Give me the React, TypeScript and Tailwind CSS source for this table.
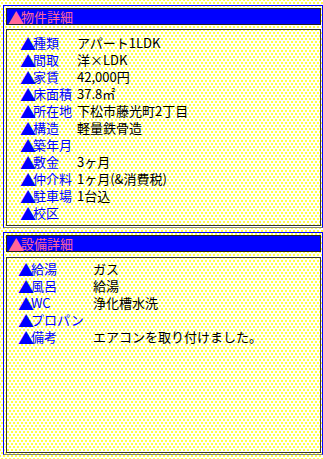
export default function App() {
  const bukken = [
    { label: '種類', value: 'アパート1LDK' },
    { label: '間取', value: '洋×LDK' },
    { label: '家賃', value: '42,000円' },
    { label: '床面積', value: '37.8㎡' },
    { label: '所在地', value: '下松市藤光町2丁目' },
    { label: '構造', value: '軽量鉄骨造' },
    { label: '築年月', value: '' },
    { label: '敷金', value: '3ヶ月' },
    { label: '仲介料', value: '1ヶ月(&消費税)' },
    { label: '駐車場', value: '1台込' },
    { label: '校区', value: '' },
  ];

  const setsubi = [
    { label: '給湯', value: 'ガス' },
    { label: '風呂', value: '給湯' },
    { label: 'WC', value: '浄化槽水洗' },
    { label: 'プロパン', value: '' },
    { label: '備考', value: 'エアコンを取り付けました。' },
  ];

  // sparse yellow dot tile behind the whole page
  const dots =
    'bg-white bg-[radial-gradient(circle,#ffff00_0.6px,transparent_1px),radial-gradient(circle,#ffff00_0.6px,transparent_1px)] bg-[length:4px_6px] bg-[position:0_0,2px_3px]';

  const Tri = () => (
    <span className="inline-block w-[13px] text-center text-[16px] leading-none">▲</span>
  );

  return (
    <div
      className={`w-[323px] h-[459px] pt-[5px] pl-[3px] text-[13px] leading-[17px] text-black ${dots}`}
      style={{ fontFamily: '"Noto Sans CJK JP", "DejaVu Sans", sans-serif' }}
    >
      {/* 物件詳細 */}
      <section className="w-[320px] border-t border-l border-r border-t-[#0000ff] border-l-[#0000ff] border-r-[#0000ff] border-b border-b-[#808080] pt-[2px] pl-[2px] pb-px">
        <div className="flex h-[17px] w-[315px] items-center border border-[#222] bg-[#0000ff] pl-px text-[#ff6699]">
          <Tri />
          <span>物件詳細</span>
        </div>
        <div className="mt-[4px] h-[197px] w-[315px] border border-[#333] pt-[4px] pl-[13px]">
          {bukken.map((row) => (
            <div key={row.label} className="flex h-[17px] items-center">
              <span className="flex w-[57px] shrink-0 items-center text-[#0000ff]">
                <Tri />
                <span>{row.label}</span>
              </span>
              <span>{row.value}</span>
            </div>
          ))}
        </div>
      </section>

      {/* 設備詳細 */}
      <section className="mt-[4px] w-[320px] border-t border-l border-r border-t-[#0000ff] border-l-[#0000ff] border-r-[#0000ff] border-b border-b-[#808080] pt-[2px] pl-[2px] pb-px">
        <div className="flex h-[17px] w-[315px] items-center border border-[#222] bg-[#0000ff] pl-px text-[#ff6699]">
          <Tri />
          <span>設備詳細</span>
        </div>
        <div className="mt-[5px] h-[196px] w-[315px] border border-[#333] pt-[2px] pl-[11px]">
          {setsubi.map((row) => (
            <div key={row.label} className="flex h-[17px] items-center">
              <span className="flex w-[75px] shrink-0 items-center text-[#0000ff]">
                <Tri />
                <span>{row.label}</span>
              </span>
              <span>{row.value}</span>
            </div>
          ))}
        </div>
      </section>
    </div>
  );
}
